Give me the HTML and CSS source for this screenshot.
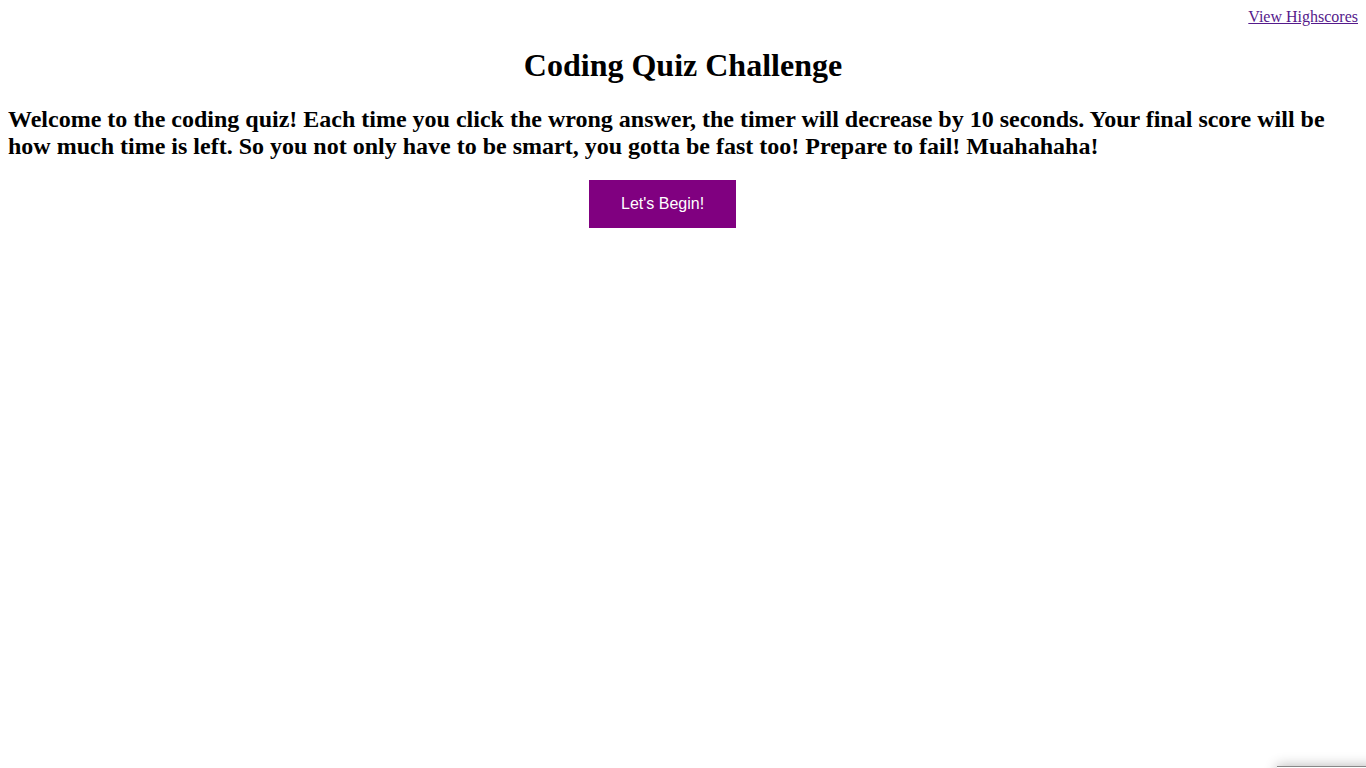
FILE: index.html
```html
<!DOCTYPE html>
<html>
<head>
<meta charset="utf-8">
<title>Coding Quiz Challenge</title>
<link rel="stylesheet" href="styles.css">
</head>
<body>
<header class="top">
  <a class="scores" href="#">View Highscores</a>
</header>
<main>
  <h1 class="title">Coding Quiz Challenge</h1>
  <h2 class="intro">Welcome to the coding quiz! Each time you click the wrong answer, the timer will decrease by 10 seconds. Your final score will be how much time is left. So you not only have to be smart, you gotta be fast too! Prepare to fail! Muahahaha!</h2>
  <div class="actions">
    <button class="start">Let's Begin!</button>
  </div>
</main>
<div class="toast"></div>
</body>
</html>
```
FILE: styles.css
```css
body {
  margin: 8px;
  font-family: "Liberation Serif", "Times New Roman", serif;
  color: #000;
  background: #fff;
}
.top {
  display: flex;
  justify-content: flex-end;
  font-size: 16px;
}
.scores {
  color: #551a8b;
}
.title {
  text-align: center;
  font-size: 32px;
  margin: 21.44px 0;
}
.intro {
  font-size: 24px;
  margin: 19.92px 0;
}
.actions {
  display: flex;
  padding-left: 581px;
}
.start {
  background: #800080;
  color: #fff;
  border: none;
  font-family: "Liberation Sans", Arial, sans-serif;
  font-size: 16px;
  padding: 15px 32px;
  cursor: pointer;
}
.toast {
  position: fixed;
  left: 1277px;
  top: 766px;
  width: 100px;
  height: 40px;
  background: #fff;
  border-top: 1px solid #888;
  box-shadow: 0 0 12px rgba(0,0,0,0.3);
}
```
